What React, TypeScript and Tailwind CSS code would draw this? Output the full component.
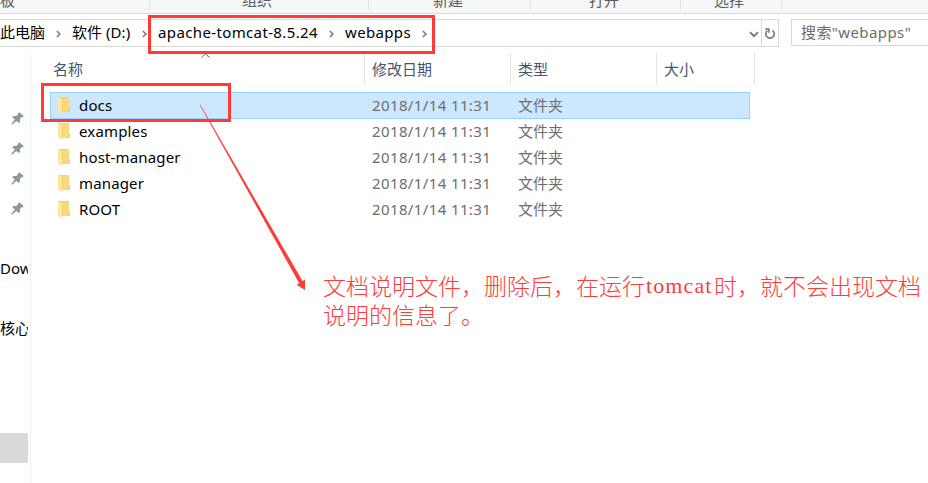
import type { ReactNode } from "react";

const folders = ["docs", "examples", "host-manager", "manager", "ROOT"];

function Chevron() {
  return (
    <svg width="5" height="8" viewBox="0 0 5 8" fill="none" className="mt-px block">
      <path d="M0.9 1L3.9 4L0.9 7" stroke="#777" strokeWidth="1.5" />
    </svg>
  );
}

// Fixed-width piece of single-line text
function Label({ className, children }: { className: string; children: ReactNode }) {
  return <span className={"block shrink-0 whitespace-nowrap " + className}>{children}</span>;
}

function Folder() {
  return (
    <svg width="13" height="18" viewBox="0 0 13 18" className="mt-px block">
      <path d="M0.2 0H11V10H12V15H0.2Z" fill="#f6d271" />
      <path d="M5 0.8H10.4V14.4H5Z" fill="#f9da7e" />
      <path d="M0 0L4 2V17L0 15Z" fill="#ffe7a2" />
    </svg>
  );
}

function Pin() {
  return (
    <svg width="13" height="13" viewBox="0 0 13 13" className="block">
      <path
        d="M8.2 0.2L12.7 4.1L11.6 5.4L10.8 5.1L8.8 7.2L9 10L7.9 11.1L5.3 8.9L1.1 12.8L0.2 12.1L3.8 7.5L1.3 5.2L2.4 4L5.3 4.1L7.2 2.1L7.1 1.2Z"
        fill="#8c98a2"
      />
    </svg>
  );
}

function Ribbon() {
  return (
    <div className="flex h-[14px] shrink-0 border-b border-[#d8dadc] bg-[#f5f6f7] text-[15px] leading-[20px] text-[#5c5c5c]">
      <div className="h-[10px] w-[150px] border-r border-[#e0e2e3]">
        <div className="-mt-[10px]">板</div>
      </div>
      <div className="h-[10px] w-[219px] border-r border-[#e0e2e3] pl-[92px]">
        <div className="-mt-[10px]">组织</div>
      </div>
      <div className="h-[10px] w-[162px] border-r border-[#e0e2e3] pl-[64px]">
        <div className="-mt-[10px]">新建</div>
      </div>
      <div className="h-[10px] w-[150px] border-r border-[#e0e2e3] pl-[58px]">
        <div className="-mt-[10px]">打开</div>
      </div>
      <div className="h-[10px] w-[101px] border-r border-[#e0e2e3] pl-[33px]">
        <div className="-mt-[10px]">选择</div>
      </div>
    </div>
  );
}

function AddressBar() {
  return (
    <div className="mt-[5px] flex h-7 shrink-0">
      <div className="flex h-7 w-[779px] items-center border-y border-r border-[#d9d9d9] text-[15px] text-black">
        <Label className="-mt-[2px] w-[56px]">此电脑</Label>
        <Chevron />
        <Label className="-mt-[2px] ml-[11px] w-[70px] tracking-[0.05px]">软件 (D:)</Label>
        <Chevron />
        <Label className="-mt-[2px] ml-[11px] w-[171px] tracking-[0.37px]">apache-tomcat-8.5.24</Label>
        <Chevron />
        <Label className="-mt-[2px] ml-[11px] w-[77px] tracking-[0.35px]">webapps</Label>
        <Chevron />
        <div className="grow" />
        <svg width="10" height="7" viewBox="0 0 10 7" fill="none" className="mr-[2px] mt-[2px]">
          <path d="M1 1.2L5 5.2L9 1.2" stroke="#777" strokeWidth="1.9" />
        </svg>
        <div className="flex h-full w-[17px] items-center justify-center border-l border-[#d9d9d9]">
          <svg width="12" height="13" viewBox="0 0 12 13" fill="none" className="shrink-0">
            <path d="M3.4 3.6A4.2 4.2 0 1 0 8.6 3.6" stroke="#757575" strokeWidth="1.6" />
            <path d="M1.2 1.9H4.9V5.7" stroke="#757575" strokeWidth="1.5" />
          </svg>
        </div>
      </div>
      <div className="ml-3 flex h-[27px] grow items-center border-y border-l border-[#d9d9d9] pl-[9px] text-[15px] tracking-[0.4px] text-[#6d6d6d]">
        搜索"webapps"
      </div>
    </div>
  );
}

function Sidebar() {
  return (
    <aside className="mt-[6px] w-[31px] shrink-0 border-r border-[#f1f1f1] text-[15px] text-black">
      <div className="flex w-7 flex-col overflow-hidden">
        <div className="flex flex-col gap-[17px] pl-[11px] pt-[59px]">
          <Pin />
          <Pin />
          <Pin />
          <Pin />
        </div>
        <div className="mt-[43px] h-5 whitespace-nowrap leading-5">Downloads</div>
        <div className="mt-[40px] h-5 whitespace-nowrap leading-5">核心技术</div>
        <div className="mt-[95px] h-[30px] bg-[#d9d9d9]" />
      </div>
    </aside>
  );
}

function FileList() {
  return (
    <main className="min-w-0 grow">
      <div className="mt-[6px] flex h-8 items-center text-[15px] text-[#44546f]">
        <div className="flex h-full w-[334px] items-center border-r border-[#e3e3e3] pl-[22px]">名称</div>
        <div className="flex h-full w-[146px] items-center border-r border-[#e3e3e3] pl-[7px]">修改日期</div>
        <div className="flex h-full w-[146px] items-center border-r border-[#e3e3e3] pl-[7px]">类型</div>
        <div className="flex h-full w-[98px] items-center border-r border-[#e3e3e3] pl-[7px]">大小</div>
      </div>
      <div className="ml-[19px] mt-[7px] w-[700px] text-[15px]">
        {folders.map((name, i) => (
          <div
            key={name}
            className={
              i === 0
                ? "-mb-px flex h-[27px] items-center border border-[#99d1ff] bg-[#cce8ff] pl-[7px]"
                : "flex h-[26px] items-center border-x border-transparent pl-[7px]"
            }
          >
            <Folder />
            <Label className="ml-[8px] w-[293px] tracking-[0.15px] text-black">{name}</Label>
            <Label className="w-[146px] tracking-[0.38px] text-[#6d6d6d]">2018/1/14 11:31</Label>
            <Label className="text-[#6d6d6d]">文件夹</Label>
          </div>
        ))}
      </div>
      <div className="ml-[292px] mt-[49px] text-[23px] leading-[29px] text-[#ff3b38]">
        <div className="flex h-[29px] items-center whitespace-nowrap font-['Noto_Sans_CJK_SC',sans-serif] font-light">
          <span className="leading-[29px]">文档说明文件，删除后，在运行</span>
          <span className="w-[69px] pl-px font-['Liberation_Serif',serif] text-[22px] leading-[29px] tracking-[1.1px]">tomcat</span>
          <span className="leading-[29px]">时，就不会出现文档</span>
        </div>
        <div className="h-[29px] whitespace-nowrap font-['Noto_Sans_CJK_SC',sans-serif] font-light">说明的信息了。</div>
      </div>
    </main>
  );
}

export default function App() {
  return (
    <div className="relative flex h-[483px] w-[928px] flex-col overflow-hidden bg-white font-['Noto_Sans','Noto_Sans_CJK_SC',sans-serif]">
      <Ribbon />
      <AddressBar />
      <div className="flex min-h-0 grow">
        <Sidebar />
        <FileList />
      </div>
      {/* Annotation marks over the window */}
      <div className="absolute left-[148px] top-[15px] h-[39px] w-[287px] border-[3px] border-[#ff3b38]" />
      <div className="absolute left-[41px] top-[83px] h-[39px] w-[190px] border-[3px] border-[#ff3b38]" />
      <svg className="absolute left-0 top-0" width="928" height="483" viewBox="0 0 928 483">
        <path d="M201.5 57.5L205.5 53.8L209.5 57.5" fill="none" stroke="#666" strokeWidth="1" />
        <path d="M199.8 105L200.4 104.7L302.6 281.2L305 279.3V290L296.5 284.7L299.2 283.2Z" fill="#ff3b38" />
      </svg>
    </div>
  );
}
